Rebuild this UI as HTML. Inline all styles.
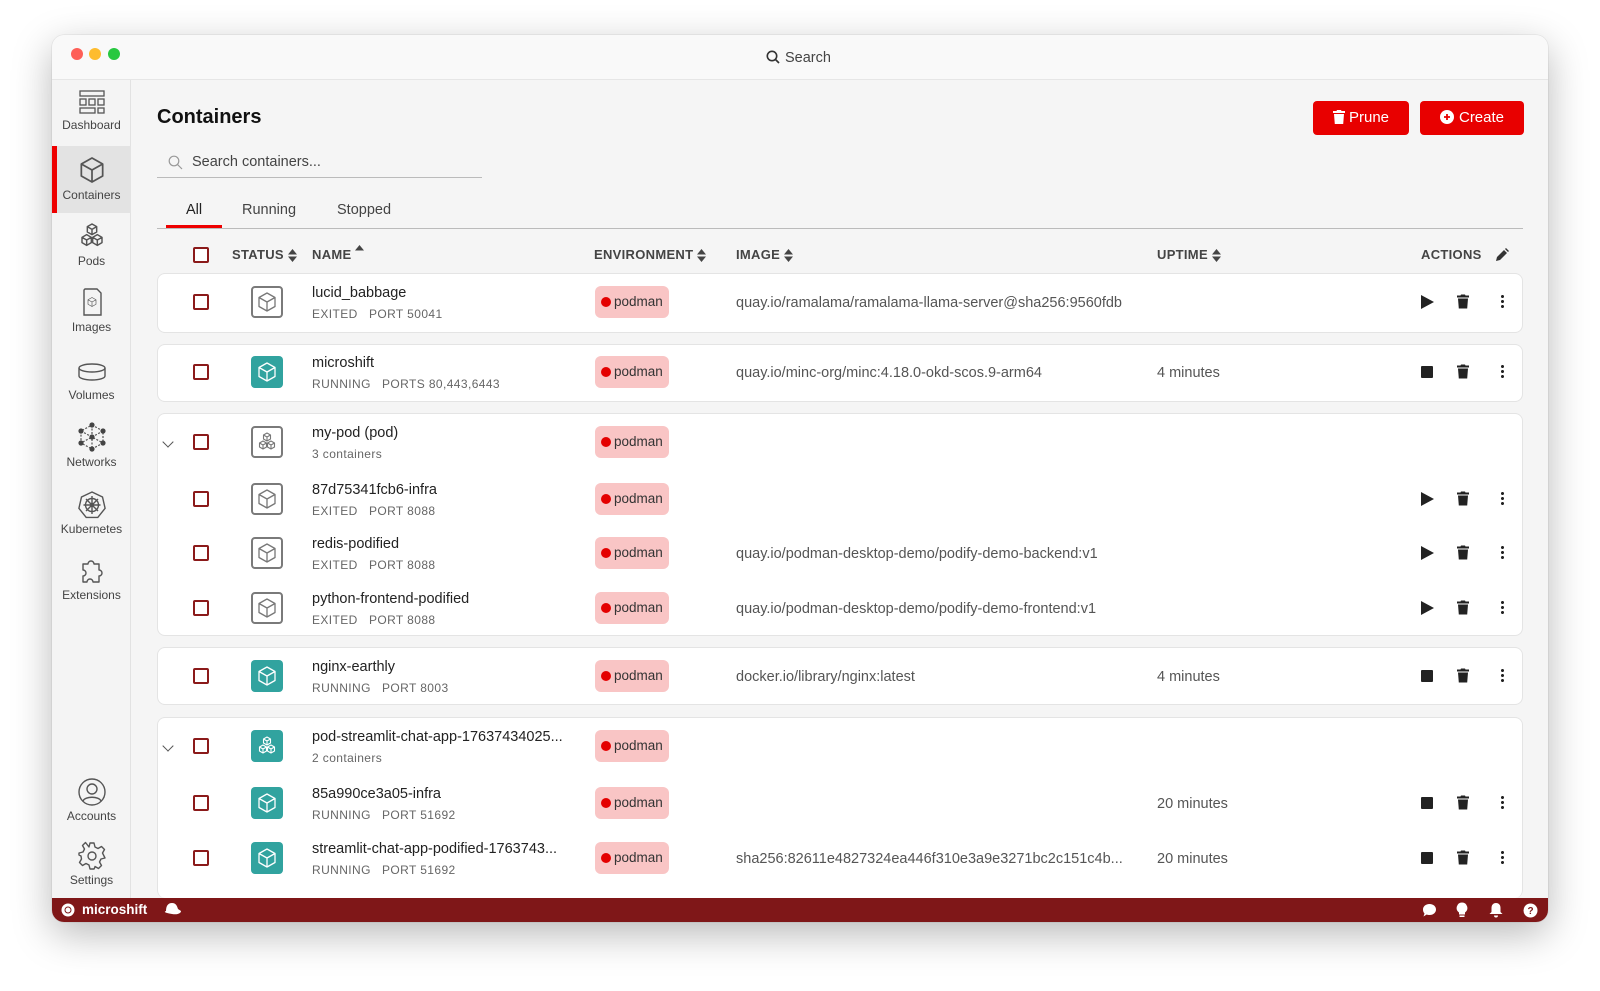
<!DOCTYPE html>
<html><head><meta charset="utf-8"><style>
*{box-sizing:border-box;margin:0;padding:0}
body{width:1600px;height:991px;background:#fff;font-family:"Liberation Sans",sans-serif;position:relative;overflow:hidden;color:#222}
.win{position:absolute;left:52px;top:35px;width:1496px;height:887px;border-radius:12px;background:#f5f5f5;box-shadow:0 12px 40px rgba(0,0,0,.28),0 0 1px rgba(0,0,0,.3);overflow:hidden}
.tb{position:absolute;left:0;top:0;width:1496px;height:45px;background:#f9f9f9;border-bottom:1px solid #e6e6e6}
.dot{position:absolute;top:13px;width:12px;height:12px;border-radius:50%}
.side{position:absolute;left:0;top:45px;width:79px;height:818px;background:#f4f4f4;border-right:1px solid #e2e2e2}
.si{position:absolute;left:0;width:79px;text-align:center;font-size:12px;color:#444}
.si svg{display:block;margin:0 auto 2px}
.sb{position:absolute;left:0;top:863px;width:1496px;height:24px;background:#7f1718;color:#fff}
.a{position:absolute}
.card{position:absolute;left:157px;width:1366px;background:#fff;border:1px solid #e4e4e4;border-radius:8px}
.r{position:absolute;left:0;width:1600px;height:58px}
.cb{position:absolute;left:193px;top:21px;width:16px;height:16px;border:2px solid #8b1a1a;border-radius:2px;background:#fff}
.ic{position:absolute;left:251px;top:13px;width:32px;height:32px;border-radius:4px}
.ex{border:2px solid #7a7a7a;background:#fff}
.ru{background:#31a39f}
.ic svg{position:absolute;left:4px;top:4px}
.ex svg{left:2px;top:2px}
.nm{position:absolute;left:312px;top:12px;font-size:14.5px;color:#222;white-space:nowrap}
.sub{position:absolute;left:312px;top:34px;font-size:12px;color:#666;letter-spacing:.4px;white-space:nowrap}
.bd{position:absolute;left:595px;top:13px;width:74px;height:32px;border-radius:6px;background:#f9c5c5;font-size:13.5px;color:#333;line-height:32px;padding-left:19px}
.bd:before{content:"";position:absolute;left:6px;top:11px;width:10px;height:10px;border-radius:50%;background:#e40000}
.im{position:absolute;left:736px;top:22px;font-size:14.5px;color:#555;white-space:nowrap}
.up{position:absolute;left:1157px;top:22px;font-size:14.5px;color:#555}
.pl{position:absolute;left:1421px;top:22px;width:0;height:0;border-left:13px solid #222;border-top:7px solid transparent;border-bottom:7px solid transparent}
.st{position:absolute;left:1421px;top:23px;width:12px;height:12px;background:#222;border-radius:1px}
.tr{position:absolute;left:1457px;top:21px}
.dt{position:absolute;left:1501px;top:21px;width:3px;height:15px;background:radial-gradient(circle,#222 1.4px,transparent 1.6px) 0 0/3px 5px}
.chev{position:absolute;left:164px;top:25px;width:8px;height:8px;border-right:1.5px solid #555;border-bottom:1.5px solid #555;transform:rotate(45deg)}
.hd{position:absolute;top:247px;height:16px;line-height:16px;font-size:13px;font-weight:bold;color:#444;letter-spacing:.3px;display:flex;align-items:center}
.srt{margin-left:4px}
</style></head><body>
<svg width="0" height="0" style="position:absolute"><defs>
<symbol id="cube" viewBox="0 0 24 24"><path d="M12 3L20 7.5V16.5L12 21L4 16.5V7.5Z M4 7.5L12 12L20 7.5M12 12V21" fill="none" stroke="currentColor" stroke-width="1.3" stroke-linejoin="round"/></symbol>
<symbol id="pod" viewBox="0 0 24 24"><g fill="none" stroke="currentColor" stroke-width="1.1" stroke-linejoin="round"><path d="M12 3l3.5 2v4L12 11 8.5 9V5z M8.5 5L12 7l3.5-2M12 7v4"/><path d="M8 11l3.5 2v4L8 19 4.5 17v-4z M4.5 13L8 15l3.5-2M8 15v4"/><path d="M16 11l3.5 2v4L16 19 12.5 17v-4z M12.5 13L16 15l3.5-2M16 15v4"/></g></symbol>
<symbol id="trash" viewBox="0 0 12 14"><path d="M4 0h4l.5 1H12v2H0V1h3.5z M1 4h10l-.8 10H1.8z" fill="currentColor"/></symbol>
</defs></svg>
<div class="win">
<div class="tb">
<div class="dot" style="left:19px;background:#fe5f57"></div>
<div class="dot" style="left:37px;background:#febc2e"></div>
<div class="dot" style="left:56px;background:#28c840"></div>
<div class="a" style="left:714px;top:15px;font-size:14.5px;color:#444"><svg width="14" height="14" viewBox="0 0 14 14" style="vertical-align:-2px;margin-right:5px"><circle cx="6" cy="6" r="4.7" fill="none" stroke="#333" stroke-width="1.6"/><path d="M9.5 9.5L13 13" stroke="#333" stroke-width="1.7"/></svg>Search</div>
</div>
<div class="side">
<div class="si" style="top:8px"><svg width="28" height="28" viewBox="0 0 28 28" fill="none" stroke="#555" stroke-width="1.3"><rect x="2" y="3" width="24" height="5"/><rect x="2" y="11" width="6" height="6"/><rect x="11" y="11" width="6" height="6"/><rect x="20" y="11" width="6" height="6"/><rect x="2" y="20" width="15" height="5"/><rect x="20" y="20" width="6" height="5"/></svg>Dashboard</div>
<div class="a" style="left:0;top:66px;width:79px;height:67px;background:#e3e3e3;border-left:5px solid #e00"></div>
<div class="si" style="top:74px;color:#444"><svg width="32" height="32" style="color:#555"><use href="#cube"/></svg>Containers</div>
<div class="si" style="top:140px"><svg width="32" height="32" style="color:#555"><use href="#pod"/></svg>Pods</div>
<div class="si" style="top:206px"><svg width="30" height="32" viewBox="0 0 30 32" fill="none" stroke="#555" stroke-width="1.4"><path d="M8 3h12l4 4v22H7V4z"/><g transform="translate(9,10) scale(.5)"><use href="#cube" width="24" height="24" style="color:#555"/></g></svg>Images</div>
<div class="si" style="top:280px"><svg width="32" height="26" viewBox="0 0 32 26" fill="none" stroke="#555" stroke-width="1.4"><ellipse cx="16" cy="8" rx="13" ry="4"/><path d="M3 8v8c0 2.2 5.8 4 13 4s13-1.8 13-4V8"/></svg>Volumes</div>
<div class="si" style="top:341px"><svg width="30" height="32" viewBox="0 0 30 32"><g stroke="#555" stroke-width="1.2" stroke-dasharray="2 1.5" fill="none"><path d="M15 4L26 10V22L15 28L4 22V10Z M15 4V28 M4 10L26 22 M26 10L4 22"/></g><g fill="#444"><circle cx="15" cy="4" r="2.6"/><circle cx="26" cy="10" r="2.6"/><circle cx="26" cy="22" r="2.6"/><circle cx="15" cy="28" r="2.6"/><circle cx="4" cy="22" r="2.6"/><circle cx="4" cy="10" r="2.6"/><circle cx="15" cy="16" r="2.6"/></g></svg>Networks</div>
<div class="si" style="top:410px"><svg width="30" height="30" viewBox="0 0 30 30" fill="none" stroke="#555" stroke-width="1.4"><path d="M15 2l10.5 5 2.6 11.3-7.3 9.1H9.2L1.9 18.3 4.5 7z"/><circle cx="15" cy="15" r="6.5"/><circle cx="15" cy="15" r="1.5"/><path d="M15 6v18M6.5 15h17M9 9l12 12M21 9L9 21"/></svg>Kubernetes</div>
<div class="si" style="top:474px"><svg width="30" height="32" viewBox="0 0 30 32" fill="none" stroke="#555" stroke-width="1.4" stroke-linejoin="round"><path d="M6 10h5a3 3 0 1 1 6 0h5v6a3 3 0 1 1 0 6v6h-6a3 3 0 1 0-6 0H6v-6a3 3 0 1 0 0-6z"/></svg>Extensions</div>
<div class="si" style="top:697px"><svg width="30" height="30" viewBox="0 0 30 30" fill="none" stroke="#555" stroke-width="1.4"><circle cx="15" cy="15" r="13"/><circle cx="15" cy="12" r="5"/><path d="M6 24c2-5 16-5 18 0"/></svg>Accounts</div>
<div class="si" style="top:761px"><svg width="30" height="30" viewBox="0 0 30 30" fill="none" stroke="#555" stroke-width="1.4"><path d="M13 2h4l1 4 3 1.5 3.5-2 3 3-2 3.5L27 15l0 0 1 2-4 1-1.5 3 2 3.5-3 3-3.5-2L18 26l-1 2h-4l-1-4-3-1.5-3.5 2-3-3 2-3.5L4 15l-2-1v-2l4-1 1.5-3-2-3.5 3-3L12 6z" stroke-linejoin="round"/><circle cx="15" cy="15" r="4"/></svg>Settings</div>
</div>
<div class="sb">
<svg class="a" style="left:9px;top:5px" width="14" height="14" viewBox="0 0 14 14"><circle cx="7" cy="7" r="6.5" fill="#fff"/><circle cx="7" cy="7" r="3" fill="none" stroke="#7f1718" stroke-width="1"/></svg>
<div class="a" style="left:30px;top:4px;font-size:13.5px;font-weight:bold">microshift</div>
<svg class="a" style="left:110px;top:4px" width="20" height="15" viewBox="0 0 20 15"><path d="M4 9c0-5 2-8 6-8s5 3 6 6l3 2c0 2-3 4-9 3S1 10 4 9z" fill="#fff"/></svg>
<svg class="a" style="left:1370px;top:5px" width="15" height="15" viewBox="0 0 15 15"><path d="M7.5 1C11.5 1 14 3.5 14 6.5S11.5 12 7.5 12c-1 0-2-.2-2.8-.5L1.5 13.5l1-3C1.5 9.5 1 8 1 6.5 1 3.5 3.5 1 7.5 1z" fill="#fff"/></svg>
<svg class="a" style="left:1404px;top:4px" width="12" height="16" viewBox="0 0 12 16"><path d="M6 .5a5.5 5.5 0 0 1 3 10v2H3v-2a5.5 5.5 0 0 1 3-10z M3.5 13.5h5v1.5h-5z" fill="#fff"/></svg>
<svg class="a" style="left:1437px;top:4px" width="14" height="16" viewBox="0 0 14 16"><path d="M7 1c3 0 4.5 2.2 4.5 5v4l2 2H.5l2-2V6C2.5 3.2 4 1 7 1z M5 13.5h4a2 2 0 0 1-4 0z" fill="#fff"/></svg>
<svg class="a" style="left:1471px;top:5px" width="15" height="15" viewBox="0 0 15 15"><circle cx="7.5" cy="7.5" r="7" fill="#fff"/><text x="7.5" y="11" font-size="10" font-weight="bold" text-anchor="middle" fill="#7f1718" font-family="Liberation Sans">?</text></svg>
</div>
</div>

<div class="a" style="left:157px;top:106px;font-size:20px;font-weight:bold;color:#111">Containers</div>
<div class="a" style="left:1313px;top:101px;width:96px;height:34px;background:#e80000;border-radius:4px;color:#fff;font-size:15px;line-height:34px;text-align:center"><svg width="12" height="14" style="vertical-align:-2px;margin-right:4px;color:#fff"><use href="#trash"/></svg>Prune</div>
<div class="a" style="left:1420px;top:101px;width:104px;height:34px;background:#e80000;border-radius:4px;color:#fff;font-size:15px;line-height:34px;text-align:center"><svg width="14" height="14" viewBox="0 0 14 14" style="vertical-align:-2px;margin-right:5px"><circle cx="7" cy="7" r="7" fill="#fff"/><path d="M7 4v6M4 7h6" stroke="#e80000" stroke-width="1.8"/></svg>Create</div>
<svg class="a" style="left:168px;top:155px" width="15" height="15" viewBox="0 0 15 15"><circle cx="6" cy="6" r="4.8" fill="none" stroke="#999" stroke-width="1.2"/><path d="M9.5 9.5L14 14" stroke="#999" stroke-width="1.2"/></svg>
<div class="a" style="left:192px;top:154px;font-size:14.5px;color:#444">Search containers...</div>
<div class="a" style="left:157px;top:177px;width:325px;height:1px;background:#bbb"></div>
<div class="a" style="left:186px;top:202px;font-size:14.5px;color:#222">All</div>
<div class="a" style="left:242px;top:202px;font-size:14.5px;color:#444">Running</div>
<div class="a" style="left:337px;top:202px;font-size:14.5px;color:#444">Stopped</div>
<div class="a" style="left:157px;top:228px;width:1366px;height:1px;background:#bbb"></div>
<div class="a" style="left:166px;top:225px;width:56px;height:3px;background:#e00"></div>

<div class="cb" style="top:247px"></div>
<div class="hd" style="left:232px">STATUS<svg class="srt" width="9" height="13" viewBox="0 0 9 13"><path d="M0 5.5L4.5 0 9 5.5zM0 7.5h9L4.5 13z" fill="#444"/></svg></div>
<div class="hd" style="left:312px">NAME<svg class="srt" width="9" height="13" viewBox="0 0 9 13" style="margin-top:-8px"><path d="M0 5.5L4.5 0 9 5.5z" fill="#444"/></svg></div>
<div class="hd" style="left:594px">ENVIRONMENT<svg class="srt" width="9" height="13" viewBox="0 0 9 13"><path d="M0 5.5L4.5 0 9 5.5zM0 7.5h9L4.5 13z" fill="#444"/></svg></div>
<div class="hd" style="left:736px">IMAGE<svg class="srt" width="9" height="13" viewBox="0 0 9 13"><path d="M0 5.5L4.5 0 9 5.5zM0 7.5h9L4.5 13z" fill="#444"/></svg></div>
<div class="hd" style="left:1157px">UPTIME<svg class="srt" width="9" height="13" viewBox="0 0 9 13"><path d="M0 5.5L4.5 0 9 5.5zM0 7.5h9L4.5 13z" fill="#444"/></svg></div>
<div class="hd" style="left:1421px">ACTIONS</div>
<svg class="a" style="left:1495px;top:248px" width="14" height="14" viewBox="0 0 14 14"><path d="M1 13l1-4 7-7 3 3-7 7z M10 1l1-1 3 3-1 1z" fill="#333"/></svg>

<div class="card" style="top:273px;height:60px"></div>
<div class="card" style="top:344px;height:58px"></div>
<div class="card" style="top:413px;height:223px"></div>
<div class="card" style="top:647px;height:58px"></div>
<div class="card" style="top:717px;height:181px;border-bottom:none"></div>

<div class="r" style="top:273px"><div class="cb"></div><div class="ic ex"><svg width="24" height="24" style="color:#777"><use href="#cube"/></svg></div><div class="nm">lucid_babbage</div><div class="sub">EXITED&nbsp;&nbsp;&nbsp;PORT 50041</div><div class="bd">podman</div><div class="im">quay.io/ramalama/ramalama-llama-server@sha256:9560fdb</div><div class="pl"></div><svg class="tr" width="12" height="15" style="color:#222"><use href="#trash"/></svg><div class="dt"></div></div>

<div class="r" style="top:343px"><div class="cb"></div><div class="ic ru"><svg width="24" height="24" style="color:#fff"><use href="#cube"/></svg></div><div class="nm">microshift</div><div class="sub">RUNNING&nbsp;&nbsp;&nbsp;PORTS 80,443,6443</div><div class="bd">podman</div><div class="im">quay.io/minc-org/minc:4.18.0-okd-scos.9-arm64</div><div class="up">4 minutes</div><div class="st"></div><svg class="tr" width="12" height="15" style="color:#222"><use href="#trash"/></svg><div class="dt"></div></div>

<div class="r" style="top:413px"><div class="chev"></div><div class="cb"></div><div class="ic ex"><svg width="24" height="24" style="color:#777"><use href="#pod"/></svg></div><div class="nm">my-pod (pod)</div><div class="sub">3 containers</div><div class="bd">podman</div></div>

<div class="r" style="top:470px"><div class="cb"></div><div class="ic ex"><svg width="24" height="24" style="color:#777"><use href="#cube"/></svg></div><div class="nm">87d75341fcb6-infra</div><div class="sub">EXITED&nbsp;&nbsp;&nbsp;PORT 8088</div><div class="bd">podman</div><div class="pl"></div><svg class="tr" width="12" height="15" style="color:#222"><use href="#trash"/></svg><div class="dt"></div></div>

<div class="r" style="top:524px"><div class="cb"></div><div class="ic ex"><svg width="24" height="24" style="color:#777"><use href="#cube"/></svg></div><div class="nm">redis-podified</div><div class="sub">EXITED&nbsp;&nbsp;&nbsp;PORT 8088</div><div class="bd">podman</div><div class="im">quay.io/podman-desktop-demo/podify-demo-backend:v1</div><div class="pl"></div><svg class="tr" width="12" height="15" style="color:#222"><use href="#trash"/></svg><div class="dt"></div></div>

<div class="r" style="top:579px"><div class="cb"></div><div class="ic ex"><svg width="24" height="24" style="color:#777"><use href="#cube"/></svg></div><div class="nm">python-frontend-podified</div><div class="sub">EXITED&nbsp;&nbsp;&nbsp;PORT 8088</div><div class="bd">podman</div><div class="im">quay.io/podman-desktop-demo/podify-demo-frontend:v1</div><div class="pl"></div><svg class="tr" width="12" height="15" style="color:#222"><use href="#trash"/></svg><div class="dt"></div></div>

<div class="r" style="top:647px"><div class="cb"></div><div class="ic ru"><svg width="24" height="24" style="color:#fff"><use href="#cube"/></svg></div><div class="nm">nginx-earthly</div><div class="sub">RUNNING&nbsp;&nbsp;&nbsp;PORT 8003</div><div class="bd">podman</div><div class="im">docker.io/library/nginx:latest</div><div class="up">4 minutes</div><div class="st"></div><svg class="tr" width="12" height="15" style="color:#222"><use href="#trash"/></svg><div class="dt"></div></div>

<div class="r" style="top:717px"><div class="chev"></div><div class="cb"></div><div class="ic ru"><svg width="24" height="24" style="color:#fff"><use href="#pod"/></svg></div><div class="nm">pod-streamlit-chat-app-17637434025...</div><div class="sub">2 containers</div><div class="bd">podman</div></div>

<div class="r" style="top:774px"><div class="cb"></div><div class="ic ru"><svg width="24" height="24" style="color:#fff"><use href="#cube"/></svg></div><div class="nm">85a990ce3a05-infra</div><div class="sub">RUNNING&nbsp;&nbsp;&nbsp;PORT 51692</div><div class="bd">podman</div><div class="up">20 minutes</div><div class="st"></div><svg class="tr" width="12" height="15" style="color:#222"><use href="#trash"/></svg><div class="dt"></div></div>

<div class="r" style="top:829px"><div class="cb"></div><div class="ic ru"><svg width="24" height="24" style="color:#fff"><use href="#cube"/></svg></div><div class="nm">streamlit-chat-app-podified-1763743...</div><div class="sub">RUNNING&nbsp;&nbsp;&nbsp;PORT 51692</div><div class="bd">podman</div><div class="im">sha256:82611e4827324ea446f310e3a9e3271bc2c151c4b...</div><div class="up">20 minutes</div><div class="st"></div><svg class="tr" width="12" height="15" style="color:#222"><use href="#trash"/></svg><div class="dt"></div></div>

</body></html>
